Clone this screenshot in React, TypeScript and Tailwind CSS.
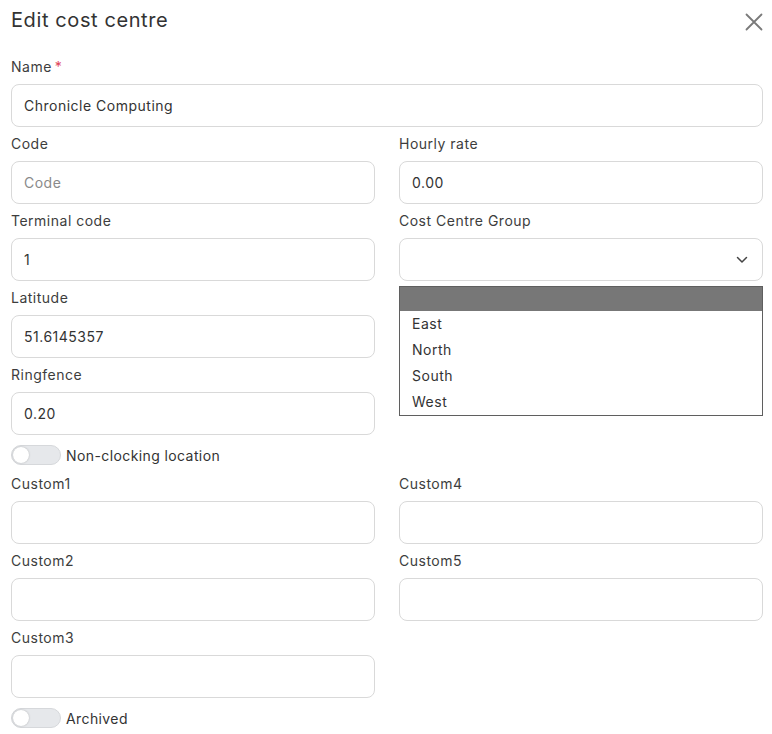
import React from "react";

const font = { fontFamily: "Inter, 'Noto Sans', sans-serif" };

function Label({ children, required }: { children: React.ReactNode; required?: boolean }) {
  return (
    <div className="h-[20px] leading-[20px] text-[14px] text-[#3d3d3d] mb-[7px] tracking-[0.5px]">
      {children}
      {required && <span className="text-[#e0455a] ml-[3px]">*</span>}
    </div>
  );
}

function Input({ value, placeholder }: { value?: string; placeholder?: string }) {
  return (
    <div className="h-[43px] rounded-[8px] border border-[#d9d9d9] bg-white px-[12px] flex items-center text-[14px] tracking-[0.5px]">
      {value ? (
        <span className="text-[#333]">{value}</span>
      ) : placeholder ? (
        <span className="text-[#8a8a8a]">{placeholder}</span>
      ) : null}
    </div>
  );
}

function Field({ label, value, placeholder, required }: { label: string; value?: string; placeholder?: string; required?: boolean }) {
  return (
    <div className="mb-[7px]">
      <Label required={required}>{label}</Label>
      <Input value={value} placeholder={placeholder} />
    </div>
  );
}

function Toggle({ label }: { label: string }) {
  return (
    <div className="h-[26px] flex items-center">
      <div className="w-[50px] h-[20px] rounded-full bg-[#e6e8eb] border border-[#d6d8db] relative">
        <div className="absolute left-[1px] top-[1px] w-[16px] h-[16px] rounded-full bg-white shadow-[0_0_2px_rgba(0,0,0,0.25)]" />
      </div>
      <span className="ml-[5px] text-[14px] text-[#333] tracking-[0.4px]">{label}</span>
    </div>
  );
}

export default function App() {
  return (
    <div className="w-[772px] h-[734px] bg-white overflow-hidden pl-[11px] pr-[9px]" style={font}>
      <div className="h-[40px] flex items-center justify-between">
        <h1 className="text-[20px] text-[#333] font-normal leading-[28px] tracking-[0.6px]">Edit cost centre</h1>
        <svg width="18" height="18" viewBox="0 0 18 18" className="mt-[3px]">
          <path d="M1.5 1.5 L16.5 16.5 M16.5 1.5 L1.5 16.5" stroke="#7a7a7a" strokeWidth="1.8" strokeLinecap="round" />
        </svg>
      </div>
      <div className="mt-[17px]">
        <Field label="Name" required value="Chronicle Computing" />
      </div>
      <div className="grid grid-cols-2 gap-x-[24px]">
        <Field label="Code" placeholder="Code" />
        <Field label="Hourly rate" value="0.00" />
        <Field label="Terminal code" value="1" />
        <div className="mb-[7px] relative">
          <Label>Cost Centre Group</Label>
          <div className="h-[43px] rounded-[8px] border border-[#d9d9d9] bg-white px-[12px] flex items-center justify-end">
            <svg width="12" height="8" viewBox="0 0 12 8" className="mr-[2px]">
              <path d="M1.5 1.5 L6 6 L10.5 1.5" fill="none" stroke="#444" strokeWidth="1.5" strokeLinecap="round" strokeLinejoin="round" />
            </svg>
          </div>
          <div className="absolute left-0 right-0 top-[75px] z-10 bg-white border border-[#5f5f5f]">
            <div className="h-[24px] bg-[#777777]" />
            {["East", "North", "South", "West"].map((o) => (
              <div key={o} className="h-[26px] flex items-center px-[12px] text-[14px] text-[#333] tracking-[0.5px] leading-[24px] pb-[1px]">
                {o}
              </div>
            ))}
          </div>
        </div>
        <Field label="Latitude" value="51.6145357" />
        <div />
        <Field label="Ringfence" value="0.20" />
        <div />
      </div>
      <div className="mb-[6px]">
        <Toggle label="Non-clocking location" />
      </div>
      <div className="grid grid-cols-2 gap-x-[24px]">
        <Field label="Custom1" />
        <Field label="Custom4" />
        <Field label="Custom2" />
        <Field label="Custom5" />
        <Field label="Custom3" />
        <div />
      </div>
      <Toggle label="Archived" />
    </div>
  );
}
